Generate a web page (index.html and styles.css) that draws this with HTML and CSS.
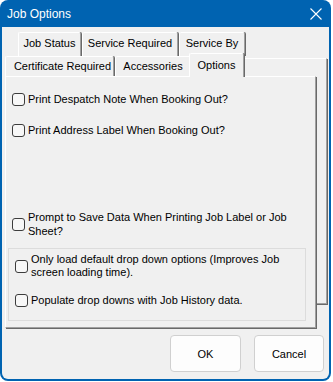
FILE: index.html
```html
<!DOCTYPE html>
<html lang="en">
<head>
  <meta charset="UTF-8" />
  <title>Job Options</title>
  <link rel="stylesheet" href="styles.css">
</head>
<body>
  <div class="window">
    <div class="titlebar">
      <span class="title">Job Options</span>
      <svg class="close" width="12" height="12" viewBox="0 0 12 12">
        <path d="M0.5 0.5 L11.5 11.5 M11.5 0.5 L0.5 11.5" stroke="#fff" stroke-width="1.1" fill="none"/>
      </svg>
    </div>

    <div class="client">
      <!-- back row of tabs -->
      <div class="row1">
        <div class="tab w-status">Job Status</div>
        <div class="tab w-service">Service Required</div>
        <div class="tab w-by">Service By</div>
      </div>

      <div class="deck">
        <div class="row2">
          <div class="tab w-cert">Certificate Required</div>
          <div class="tab w-acc">Accessories</div>
          <div class="tab tab-active w-opt">Options</div>
        </div>

        <div class="page">
          <label class="check first">
            <span class="box"></span>
            <span class="text">Print Despatch Note When Booking Out?</span>
          </label>
          <label class="check second">
            <span class="box"></span>
            <span class="text">Print Address Label When Booking Out?</span>
          </label>
          <label class="check third">
            <span class="box"></span>
            <span class="text">Prompt to Save Data When Printing Job Label or Job Sheet?</span>
          </label>

          <div class="group">
            <label class="check tight">
              <span class="box"></span>
              <span class="text">Only load default drop down options (Improves Job screen loading time).</span>
            </label>
            <label class="check populate">
              <span class="box"></span>
              <span class="text">Populate drop downs with Job History data.</span>
            </label>
          </div>
        </div>
      </div>

      <div class="buttons">
        <button class="btn btn-ok">OK</button>
        <button class="btn btn-cancel">Cancel</button>
      </div>
    </div>
  </div>
</body>
</html>
```

FILE: styles.css
```css
body {
  margin: 0;
  background: #fff;
  font-family: "Liberation Sans", Arial, sans-serif;
  font-size: 11px;
  color: #000;
}
.window {
  width: 331px;
  height: 381px;
  box-sizing: border-box;
  padding: 0 2px 2px 2px;
  background: #0063b1;
  border-radius: 8px;
  display: flex;
  flex-direction: column;
}
.titlebar {
  height: 27px;
  display: flex;
  align-items: center;
  justify-content: space-between;
  padding: 1px 7px 0 5px;
  box-sizing: border-box;
}
.title {
  color: #fff;
  font-size: 12px;
}
.close {
  display: block;
}
.client {
  flex: 1;
  background: #f0f0f0;
  border-radius: 0 0 6px 6px;
  padding: 5px 0 0 16px;
}

/* tabs */
.row1 {
  display: flex;
  height: 24px;
}
.tab {
  box-sizing: border-box;
  text-align: center;
  line-height: 14px;
  background: #f0f0f0;
  border-top: 1px solid #fff;
  border-left: 1px solid #fff;
  border-right: 1px solid #a0a0a0;
  box-shadow: 1px 0 0 #696969;
  border-radius: 2px 2px 0 0;
  white-space: nowrap;
}
.row1 .tab {
  height: 24px;
  padding-top: 3px;
  margin-right: 1px;
}
.w-status { width: 63px; }
.w-service { width: 96px; }
.w-by { width: 66px; }

.deck {
  margin-top: 2px;
  width: 309px;
  height: 246px;
  box-sizing: border-box;
  border: 1px solid;
  border-color: #fff #a0a0a0 #a0a0a0 #fff;
  box-shadow: 1px 1px 0 #696969;
}
.row2 {
  display: flex;
  align-items: flex-end;
  height: 23px;
  margin: -6px 0 0 -14px;
}
.row2 .tab {
  height: 20px;
  padding-top: 2px;
  margin-right: 1px;
}
.w-cert { width: 109px; padding-left: 6px; }
.w-acc { width: 76px; }
.row2 .tab-active {
  position: relative;
  z-index: 1;
  width: 55px;
  height: 24px;
  padding-top: 4px;
  margin-left: -3px;
  margin-bottom: -1px;
}

.page {
  width: 311px;
  height: 252px;
  margin-left: -14px;
  box-sizing: border-box;
  background: #f0f0f0;
  border: 1px solid;
  border-color: #fff #a0a0a0 #a0a0a0 #fff;
  box-shadow: 1px 1px 0 #696969;
  padding: 15px 0 0 6px;
}

/* checkboxes */
.check {
  display: flex;
  align-items: center;
  gap: 3px;
  line-height: 14px;
}
.box {
  flex: none;
  width: 13px;
  height: 13px;
  box-sizing: border-box;
  border: 1px solid #3c3c3c;
  border-radius: 3px;
  background: #f7f7f7;
}
.text {
  max-width: 262px;
}
.second { margin-top: 17px; }
.third { margin-top: 73px; }

.group {
  margin: 10px 0 0 -4px;
  width: 298px;
  height: 73px;
  box-sizing: border-box;
  border: 1px solid #dcdcdc;
  padding: 4px 0 0 6px;
}
.tight {
  line-height: 13px;
}
.populate { margin-top: 14px; }

/* dialog buttons */
.buttons {
  display: flex;
  justify-content: flex-end;
  gap: 13px;
  margin-top: 31px;
  padding-right: 5px;
}
.btn {
  height: 37px;
  font-family: inherit;
  font-size: 11px;
  color: #000;
  background: #fdfdfd;
  border: 1px solid #d0d0d0;
  border-radius: 4px;
}
.btn-ok { width: 71px; }
.btn-cancel { width: 70px; }
```
